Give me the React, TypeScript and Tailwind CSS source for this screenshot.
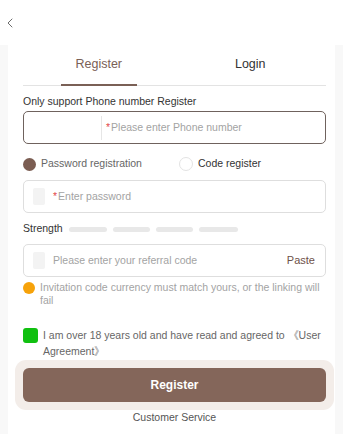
import { ChevronLeft } from 'lucide-react';

const Field = ({ placeholder, required, right, focused, prefix }: {
  placeholder: string;
  required?: boolean;
  right?: string;
  focused?: boolean;
  prefix?: 'divider' | 'box';
}) => (
  <div
    className={`flex h-[33px] items-center rounded-[5px] border bg-white pl-[9px] pr-[10px] ${
      focused ? 'border-[#6f625d]' : 'border-[#dedede]'
    }`}
  >
    {prefix === 'divider' && <div className="ml-[68px] mr-[4px] h-[24px] w-px bg-[#e6e6e6]" />}
    {prefix === 'box' && <div className="mr-[8px] h-[17px] w-[12px] rounded-[2px] bg-[#f3f3f3]" />}
    {required && <span className="mr-[1px] text-[10.5px] text-[#e24b4b]">*</span>}
    <span className="flex-1 text-[10.5px] text-[#a3a3a3]">{placeholder}</span>
    {right && <span className="text-[11px] text-[#6e5148]">{right}</span>}
  </div>
);

export default function App() {
  return (
    <div className="min-h-[434px] w-[343px] bg-white font-['Liberation_Sans',Arial,sans-serif]">
      <div className="flex h-[45px] items-center pl-[2px]">
        <ChevronLeft className="h-[16px] w-[16px] text-[#555]" strokeWidth={1.3} />
      </div>
      <div className="bg-[#f8f8f8] px-[8px]">
        <div className="bg-white pl-[15px] pr-[9px]">
          <div className="flex border-b border-[#e3e3e3] pt-[7px]">
            <div className="flex flex-1 flex-col items-center">
              <span className="text-[12.5px] leading-[24px] text-[#7a6056]">Register</span>
              <div className="mt-[7px] h-[2px] w-[76px] translate-y-[1px] bg-[#7a6056]" />
            </div>
            <div className="flex flex-1 flex-col items-center">
              <span className="text-[12.5px] leading-[24px] text-[#333]">Login</span>
              <div className="mt-[7px] h-[2px]" />
            </div>
          </div>
          <p className="mt-[8px] text-[10.5px] leading-[14px] text-[#333]">Only support Phone number Register</p>
          <div className="mt-[3px]">
            <Field placeholder="Please enter Phone number" required focused prefix="divider" />
          </div>
          <div className="mt-[12px] flex h-[16px] items-center text-[10.5px]">
            <div className="flex w-[156px] items-center">
              <span className="h-[13px] w-[13px] rounded-full bg-[#7b5d52]" />
              <span className="ml-[5px] text-[#666]">Password registration</span>
            </div>
            <div className="flex items-center">
              <span className="h-[14px] w-[14px] rounded-full border border-[#e3e3e3]" />
              <span className="ml-[5px] text-[#333]">Code register</span>
            </div>
          </div>
          <div className="mt-[8px]">
            <Field placeholder="Enter password" required prefix="box" />
          </div>
          <div className="mt-[9px] flex h-[14px] items-center">
            <span className="text-[10.5px] text-[#333]">Strength</span>
            <div className="ml-[6px] flex gap-[6px]">
              <div className="h-[5px] w-[38px] rounded-full bg-[#e8e8e8]" />
              <div className="h-[5px] w-[37px] rounded-full bg-[#e8e8e8]" />
              <div className="h-[5px] w-[37px] rounded-full bg-[#e8e8e8]" />
              <div className="h-[5px] w-[39px] rounded-full bg-[#e8e8e8]" />
            </div>
          </div>
          <div className="mt-[8px]">
            <Field placeholder="Please enter your referral code" right="Paste" prefix="box" />
          </div>
          <div className="mt-[4px] flex items-start">
            <span className="mt-[1px] h-[12px] w-[12px] shrink-0 rounded-full bg-[#f6a20a]" />
            <p className="ml-[5px] text-[10.5px] leading-[13px] text-[#a3a3a3]">
              Invitation code currency must match yours, or the linking will fail
            </p>
          </div>
          <div className="mt-[20px] flex items-start">
            <span className="mt-[1px] h-[15px] w-[15px] shrink-0 rounded-[3px] bg-[#10c010]" />
            <p className="ml-[5px] text-[10.5px] leading-[16px] text-[#666]">
              I am over 18 years old and have read and agreed to 《User Agreement》
            </p>
          </div>
          <div className="-mx-[8px] mt-[1px] rounded-[11px] bg-[#f3ede9] p-[8px]">
            <button className="h-[34px] w-full rounded-[6px] bg-[#84665a] text-[12px] font-bold text-white">
              Register
            </button>
          </div>
          <p className="pb-[8px] text-center text-[10.5px] text-[#555]">Customer Service</p>
        </div>
      </div>
    </div>
  );
}
